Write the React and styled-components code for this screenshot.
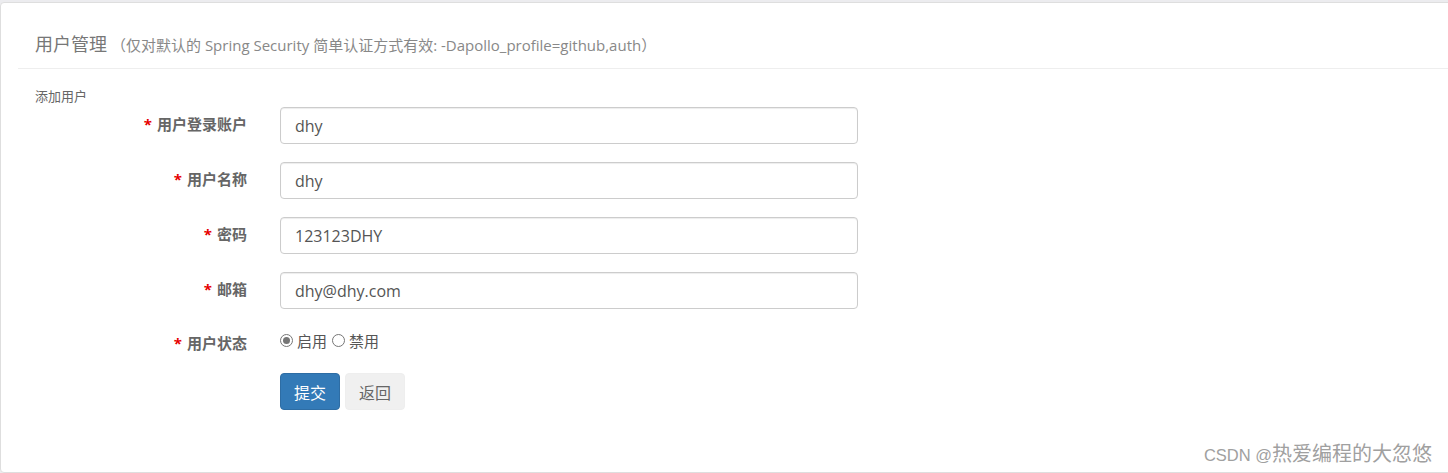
import styled, { createGlobalStyle } from 'styled-components'

const GlobalStyle = createGlobalStyle`
  html, body {
    margin: 0;
    padding: 0;
    background: #ececef;
    overflow: hidden;
  }
  body {
    font-family: "Open Sans", "Noto Sans CJK SC", sans-serif;
    color: #555;
  }
`

const Panel = styled.div`
  position: relative;
  margin-top: 2px;
  height: 471px;
  width: 1460px;
  box-sizing: border-box;
  background: #fff;
  border: 1px solid #dedede;
  border-radius: 4px;
`

const Heading = styled.div`
  margin-left: 17px;
  padding: 27px 0 0 17px;
  height: 38px;
  border-bottom: 1px solid #eeeeee;
  display: flex;
  align-items: baseline;
`

const Title = styled.span`
  font-size: 18px;
  color: #777;
`

const Subtitle = styled.span`
  margin-left: 4px;
  font-size: 15px;
  color: #888;
`

const Body = styled.div`
  padding: 17px 0 0 34px;
`

const SectionName = styled.div`
  font-size: 13px;
  line-height: 21px;
  color: #666;
`

const Form = styled.div`
  display: grid;
  grid-template-columns: 212px 578px;
  column-gap: 33px;
  row-gap: 18px;
`

const Label = styled.label`
  text-align: right;
  font-size: 15px;
  font-weight: bold;
  color: #666;
  padding-top: ${(p) => p.$top || 7}px;
  line-height: 20px;
`

const Star = styled.span`
  color: #e60000;
  margin-right: 5px;
`

const Input = styled.input`
  box-sizing: border-box;
  width: 100%;
  height: 37px;
  padding: 0 14px;
  font-family: "Open Sans", "Noto Sans CJK SC", sans-serif;
  font-size: 16px;
  color: #555;
  border: 1px solid #cccccc;
  border-radius: 4px;
  box-shadow: inset 0 1px 1px rgba(0, 0, 0, 0.075);
  outline: none;
`

const RadioRow = styled.div`
  display: flex;
  align-items: center;
  height: 28px;
  padding-bottom: 2px;
  box-sizing: border-box;
  font-size: 15px;
  color: #555;
  font-family: "Noto Sans CJK SC", sans-serif;
`

const RadioItem = styled.span`
  display: inline-flex;
  align-items: center;
  margin-right: 5px;
  gap: 4px;
`

const Circle = styled.span`
  width: 11px;
  height: 11px;
  border: 1px solid #767676;
  border-radius: 50%;
  display: inline-flex;
  align-items: center;
  justify-content: center;
  &::after {
    content: '';
    width: 7px;
    height: 7px;
    border-radius: 50%;
    background: ${(p) => (p.$checked ? '#767676' : 'transparent')};
  }
`

const Buttons = styled.div`
  display: flex;
  gap: 5px;
  grid-column: 2;
`

const Button = styled.button`
  height: 37px;
  padding: 0 13px;
  border-radius: 4px;
  font-family: "Noto Sans CJK SC", sans-serif;
  font-size: 16px;
  background: ${(p) => (p.$primary ? '#337ab7' : '#f0f0f0')};
  color: ${(p) => (p.$primary ? '#fff' : '#666')};
  border: 1px solid ${(p) => (p.$primary ? '#2e6da4' : '#eeeeee')};
`

const Watermark = styled.div`
  position: absolute;
  right: 27px;
  bottom: 5px;
  font-family: "Liberation Sans", "Noto Sans CJK SC", sans-serif;
  font-size: 16.5px;
  color: #a0a0a0;
`

const WatermarkName = styled.span`
  font-size: 20px;
  font-family: "Noto Sans CJK SC", sans-serif;
`

const fields = [
  { label: '用户登录账户', value: 'dhy' },
  { label: '用户名称', value: 'dhy' },
  { label: '密码', value: '123123DHY' },
  { label: '邮箱', value: 'dhy@dhy.com' },
]

export default function App() {
  return (
    <>
      <GlobalStyle />
      <Panel>
        <Heading>
          <Title>用户管理</Title>
          <Subtitle>（仅对默认的 Spring Security 简单认证方式有效: -Dapollo_profile=github,auth）</Subtitle>
        </Heading>
        <Body>
          <SectionName>添加用户</SectionName>
          <Form>
            {fields.map((f) => [
              <Label key={f.label + 'l'}>
                <Star>*</Star>
                {f.label}
              </Label>,
              <Input key={f.label + 'i'} defaultValue={f.value} />,
            ])}
            <Label $top={6}>
              <Star>*</Star>
              用户状态
            </Label>
            <RadioRow>
              <RadioItem>
                <Circle $checked />
                启用
              </RadioItem>
              <RadioItem>
                <Circle />
                禁用
              </RadioItem>
            </RadioRow>
            <Buttons>
              <Button $primary>提交</Button>
              <Button>返回</Button>
            </Buttons>
          </Form>
        </Body>
        <Watermark>
          CSDN @<WatermarkName>热爱编程的大忽悠</WatermarkName>
        </Watermark>
      </Panel>
    </>
  )
}
